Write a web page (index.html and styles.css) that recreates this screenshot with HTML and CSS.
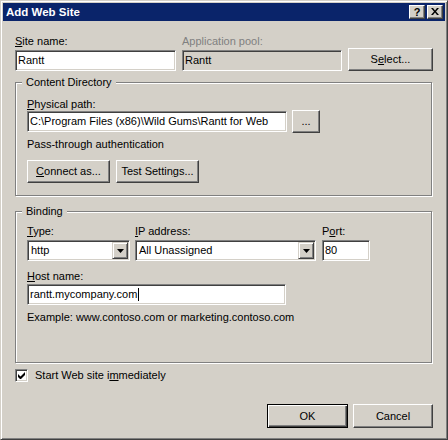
FILE: index.html
```html
<!DOCTYPE html>
<html>
<head>
<meta charset="utf-8">
<link rel="stylesheet" href="styles.css">
</head>
<body>
<div class="window">
  <div class="titlebar">
    <span class="title">Add Web Site</span>
    <div class="tb-buttons">
      <span class="tb-btn help">?</span>
      <span class="tb-btn close"><svg width="8" height="7" viewBox="0 0 8 7"><path d="M0 0h2l2 2.5L6 0h2L5 3.5 8 7H6L4 4.5 2 7H0l3-3.5z" fill="#000"/></svg></span>
    </div>
  </div>
  <div class="body">
    <div class="row1">
      <div class="field site">
        <div class="lbl lbl-site"><u>S</u>ite name:</div>
        <div class="input">Rantt</div>
      </div>
      <div class="field pool">
        <div class="lbl lbl-site disabled">Application pool:</div>
        <div class="input readonly">Rantt</div>
      </div>
      <div class="btn btn-select">S<u>e</u>lect...</div>
    </div>

    <fieldset class="group group-content">
      <legend>Content Directory</legend>
      <div class="lbl lbl-path"><u>P</u>hysical path:</div>
      <div class="path-row">
        <div class="input input-path">C:\Program Files (x86)\Wild Gums\Rantt for Web</div>
        <div class="btn btn-browse">...</div>
      </div>
      <div class="note">Pass-through authentication</div>
      <div class="btn-row">
        <div class="btn btn-connect"><u>C</u>onnect as...</div>
        <div class="btn btn-test">Test Settin<u>g</u>s...</div>
      </div>
    </fieldset>

    <fieldset class="group group-binding">
      <legend>Binding</legend>
      <div class="binding-row">
        <div class="field f-type">
          <div class="lbl lbl-type"><u>T</u>ype:</div>
          <div class="combo">
            <span class="combo-text">http</span>
            <span class="combo-btn"><svg width="7" height="4" viewBox="0 0 7 4"><path d="M0 0h7L3.5 4z" fill="#000"/></svg></span>
          </div>
        </div>
        <div class="field f-ip">
          <div class="lbl lbl-type"><u>I</u>P address:</div>
          <div class="combo">
            <span class="combo-text">All Unassigned</span>
            <span class="combo-btn"><svg width="7" height="4" viewBox="0 0 7 4"><path d="M0 0h7L3.5 4z" fill="#000"/></svg></span>
          </div>
        </div>
        <div class="field f-port">
          <div class="lbl lbl-type">P<u>o</u>rt:</div>
          <div class="input">80</div>
        </div>
      </div>
      <div class="lbl lbl-host"><u>H</u>ost name:</div>
      <div class="input input-host">rantt.mycompany.com<span class="caret"></span></div>
      <div class="example">Example: www.contoso.com or marketing.contoso.com</div>
    </fieldset>

    <div class="check-row">
      <span class="checkbox"><svg width="7" height="7" viewBox="0 0 7 7"><path d="M0 2v3l2 2h1l4-4V0L2.5 4.5z" fill="#000"/></svg></span>
      <span class="check-label">Start Web site i<u>m</u>mediately</span>
    </div>

    <div class="footer">
      <div class="btn btn-ok">OK</div>
      <div class="btn btn-cancel">Cancel</div>
    </div>
  </div>
</div>
</body>
</html>
```

FILE: styles.css
```css
html, body {
  margin: 0;
  padding: 0;
  background: #d4d0c8;
}

.window {
  width: 448px;
  height: 440px;
  box-sizing: border-box;
  border: 1px solid;
  border-color: #d4d0c8 #404040 #404040 #d4d0c8;
  box-shadow: inset 1px 1px 0 #ffffff, inset -1px -1px 0 #808080;
  padding: 2px;
  background: #d4d0c8;
  font-family: "Liberation Sans", Arial, sans-serif;
  font-size: 11px;
  color: #000;
  display: flex;
  flex-direction: column;
}

.titlebar {
  height: 18px;
  background: #0a246a;
  display: flex;
  align-items: center;
  justify-content: space-between;
  padding-left: 3px;
}

.title {
  color: #fff;
  font-weight: bold;
  font-size: 11.5px;
  line-height: 18px;
}

.tb-buttons {
  display: flex;
  gap: 2px;
  margin-right: 2px;
}

.tb-btn {
  width: 16px;
  height: 14px;
  box-sizing: border-box;
  background: #d4d0c8;
  border: 1px solid;
  border-color: #ffffff #404040 #404040 #ffffff;
  box-shadow: inset -1px -1px 0 #808080;
  display: flex;
  align-items: center;
  justify-content: center;
}

.help {
  font-weight: bold;
  font-size: 11px;
  line-height: 12px;
  padding-bottom: 1px;
}

.close svg {
  display: block;
  margin-bottom: 1px;
}

.body {
  padding: 14px 12px 0 12px;
}

.lbl {
  line-height: 13px;
  white-space: nowrap;
}

.lbl.disabled {
  color: #808080;
}

.lbl-site { margin-bottom: 2px; }
.lbl-path { margin-bottom: -1px; }
.lbl-type { margin-bottom: 2px; }
.lbl-host { margin-top: 9px; margin-bottom: 1px; }

.row1 {
  display: grid;
  grid-template-columns: 161px 160px 85px;
  column-gap: 6px;
  align-items: end;
}

.input {
  height: 21px;
  box-sizing: border-box;
  background: #fff;
  border: 1px solid;
  border-color: #808080 #ffffff #ffffff #808080;
  box-shadow: inset 1px 1px 0 #404040, inset -1px -1px 0 #d4d0c8;
  padding: 1px 2px;
  line-height: 17px;
  white-space: nowrap;
  overflow: hidden;
}

.input.readonly {
  background: #d4d0c8;
}

.btn {
  height: 23px;
  box-sizing: border-box;
  background: #d4d0c8;
  border: 1px solid;
  border-color: #ffffff #404040 #404040 #ffffff;
  box-shadow: inset -1px -1px 0 #808080;
  display: flex;
  align-items: center;
  justify-content: center;
  white-space: nowrap;
  line-height: 13px;
}

.btn-select {
  margin-bottom: 0;
}

.group {
  margin: 0 1px 0 0;
  padding: 0 11px;
  min-width: 0;
  border: 1px solid #808080;
  box-shadow: inset 1px 1px 0 #ffffff, 1px 1px 0 #ffffff;
}

.group legend {
  margin-left: -5px;
  padding: 0 4px;
  line-height: 13px;
  background: #d4d0c8;
}

.group-content {
  margin-top: 5px;
  padding-top: 9px;
  padding-bottom: 12px;
}

.path-row {
  display: flex;
  gap: 5px;
  align-items: center;
}

.input-path {
  width: 260px;
}

.btn-browse {
  width: 28px;
}

.note {
  margin-top: 5px;
  line-height: 13px;
}

.btn-row {
  display: flex;
  gap: 6px;
  margin-top: 9px;
}

.btn-connect { width: 83px; }
.btn-test { width: 83px; }

.group-binding {
  margin-top: 9px;
  padding-top: 7px;
  padding-bottom: 38px;
}

.binding-row {
  display: grid;
  grid-template-columns: 103px 181px 49px;
  column-gap: 5px;
}

.f-port { margin-left: 1px; }

.combo {
  height: 21px;
  box-sizing: border-box;
  background: #fff;
  border: 1px solid;
  border-color: #808080 #ffffff #ffffff #808080;
  box-shadow: inset 1px 1px 0 #404040, inset -1px -1px 0 #d4d0c8;
  padding: 1px;
  display: flex;
}

.combo-text {
  flex: 1;
  padding-left: 2px;
  line-height: 17px;
  white-space: nowrap;
}

.combo-btn {
  width: 16px;
  height: 17px;
  box-sizing: border-box;
  background: #d4d0c8;
  border: 1px solid;
  border-color: #d4d0c8 #404040 #404040 #d4d0c8;
  box-shadow: inset 1px 1px 0 #ffffff, inset -1px -1px 0 #808080;
  display: flex;
  align-items: center;
  justify-content: center;
}

.combo-btn svg { display: block; }

.input-host {
  width: 259px;
}

.caret {
  display: inline-block;
  width: 1px;
  height: 13px;
  background: #000;
  vertical-align: -3px;
  margin-left: 1px;
}

.example {
  margin-top: 6px;
  line-height: 13px;
  white-space: nowrap;
}

.check-row {
  display: flex;
  align-items: center;
  gap: 7px;
  margin-top: 6px;
  height: 13px;
}

.checkbox {
  width: 13px;
  height: 13px;
  box-sizing: border-box;
  background: #fff;
  border: 1px solid;
  border-color: #808080 #ffffff #ffffff #808080;
  box-shadow: inset 1px 1px 0 #404040, inset -1px -1px 0 #d4d0c8;
  display: flex;
  align-items: center;
  justify-content: center;
}

.checkbox svg { display: block; }

.check-label { line-height: 13px; }

.footer {
  display: flex;
  justify-content: flex-end;
  gap: 5px;
  margin-top: 22px;
}

.btn-ok {
  width: 81px;
  height: 24px;
  border: 1px solid #000;
  box-shadow: inset 1px 1px 0 #ffffff, inset -1px -1px 0 #404040, inset -2px -2px 0 #808080;
}

.btn-cancel {
  width: 80px;
  height: 24px;
}
```
